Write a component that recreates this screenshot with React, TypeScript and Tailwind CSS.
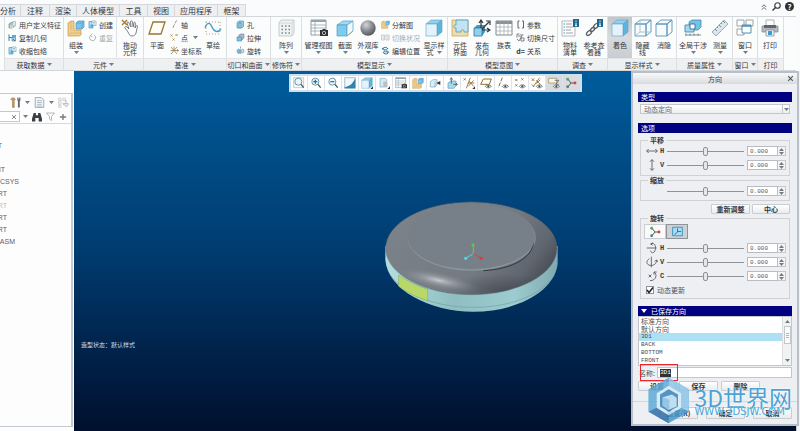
import { useState, type ReactNode } from "react";
import { clsx } from "clsx";

const TABS = [
  { label: "分析", width: "w-[21px] justify-start" },
  { label: "注释", width: "w-[29px]" },
  { label: "渲染", width: "w-[27px]" },
  { label: "人体模型", width: "w-[43px]" },
  { label: "工具", width: "w-[28px]" },
  { label: "视图", width: "w-[27px]" },
  { label: "应用程序", width: "w-[43px]" },
  { label: "框架", width: "w-[28px]" },
];

const TREE = [
  { text: "T", className: "w-[2px]" },
  { text: "", className: "w-[2px]" },
  { text: "NT", className: "w-[5px]" },
  { text: "CSYS", className: "w-[19px]" },
  { text: "RT", className: "w-[7px]" },
  { text: "RT", className: "w-[7px] text-[#b9bcc4]" },
  { text: "RT", className: "w-[7px]" },
  { text: "RT", className: "w-[7px]" },
  { text: "ASM", className: "w-[15px]" },
];

const SAVED_VIEWS = ["标准方向", "默认方向", "3D1", "BACK", "BOTTOM", "FRONT"];

/* ---------- icons, all on an 18 unit grid ---------- */

function Icon({ className = "size-[18px]", children }: { className?: string; children: ReactNode }) {
  return (
    <svg viewBox="0 0 18 18" fill="none" aria-hidden="true" className={clsx("shrink-0", className)}>
      {children}
    </svg>
  );
}

const Cube = ({ top = "#8fd0ec", side = "#5fb4dc", front = "#e4f3fb" }) => (
  <g stroke="#5aa3c8" strokeWidth="0.6" strokeLinejoin="round">
    <path d="M1 5 6 1h11l-5 4z" fill={top} />
    <path d="m12 5 5-4v12l-5 4z" fill={side} />
    <path d="M1 5h11v12H1z" fill={front} />
  </g>
);

const WireCube = ({ hidden = false }) => (
  <g stroke="#5c93b5" strokeWidth="0.9" strokeLinejoin="round">
    <path d="M1 5 6 1h11l-5 4zM12 5l5-4v12l-5 4zM1 5h11v12H1z" fill="#f6fbfe" />
    {hidden && <path d="M6 1v12h11M6 13l-5 4" stroke="#a3bccb" />}
  </g>
);

const Assemble = () => (
  <>
    <path d="M1 4 4 2h3v9h7v5l-2 1H1z" fill="#f0cd8c" stroke="#c79a4d" strokeWidth="0.7" />
    <path d="M4 2v9M1 17l3-3h10" stroke="#d6ab62" strokeWidth="0.6" />
    <path d="m9 4 2-2h6v6l-2 2H9z" fill="#7cc5e8" stroke="#4593bb" strokeWidth="0.7" />
    <path d="M9 4h6v6M15 4l2-2" stroke="#4593bb" strokeWidth="0.6" />
  </>
);

const Create = () => (
  <>
    <path d="M2 3h8v13H2z" fill="#b6dff2" stroke="#4b93b7" strokeWidth="1.4" />
    <path d="M8 2h8v9H8z" fill="#fff" stroke="#6d96ad" strokeWidth="1.2" />
    <path d="M5 9h5v6H5z" fill="#4ea9d4" />
    <path d="M10 5h4M10 8h4" stroke="#6d96ad" strokeWidth="1.2" />
  </>
);

const Shape = () => (
  <>
    <path d="m2 8 4-3h6v8l-3 3H2z" fill="#8ccbe8" stroke="#4b86a8" strokeWidth="1.2" />
    <path d="M9 3h6v9H9z" fill="#dce7ee" stroke="#8499a8" strokeWidth="1" />
    <path d="M4 10h6v6H4z" fill="#f0cf95" />
  </>
);

const CopyGeom = () => (
  <>
    <path d="M2 3v13M2 9h6" stroke="#2a6f97" strokeWidth="1.8" />
    <path d="M8 4h8v4H8z" fill="#57add6" />
    <path d="M8 9h7v7H8z" fill="#a7d8ef" stroke="#33789d" strokeWidth="1.2" />
    <path d="m10 12 4 4" stroke="#36454f" strokeWidth="1.4" />
  </>
);

const Repeat = () => (
  <path d="M5 5a6 6 0 1 0 7-1M9 1 5 5l4 3" stroke="#a9adb2" strokeWidth="1.8" />
);

const Hand = () => (
  <>
    <path d="m1 1 5 5M6 1 1 6" stroke="#a47b2c" strokeWidth="1.3" />
    <path
      d="M7 13 4 9c-1-1 1-2 2-1l2 2-2-6c0-1.500 1.500-1.500 2 0l2 4-.5-5c0-1.500 1.700-1.500 2 0l.7 5 .6-4c.3-1.200 1.700-1 1.600.3L14 9l1-2c.6-1 1.700-.5 1.500.5L15 14c-.5 2-2 3-4 3-2.500 0-3-2-4-4z"
      fill="#fff"
      stroke="#5b6066"
      strokeWidth="0.8"
    />
  </>
);

const Plane = () => <path d="M5 3h12l-4 12H1z" fill="#fffdf8" stroke="#9a7434" strokeWidth="1.300" />;

const Axis = () => <path d="M13 1 5 17" stroke="#8d6c30" strokeWidth="1.6" strokeDasharray="5 2 2 2" />;

const Points = () => (
  <path
    d="m1 3 4 4M5 3 1 7M11 2l4 4M15 2l-4 4M5 11l4 4M9 11l-4 4"
    stroke="#a47b2c"
    strokeWidth="1.4"
  />
);

const Csys = () => (
  <path d="m2 2 12 14M14 2 2 16M8 1v6M1 9h16M14 7l3 2-3 2" stroke="#8d6c30" strokeWidth="1.4" />
);

const Sketch = () => (
  <>
    <path d="M2 3h14M2 15h14M2 3v12M16 3v12" stroke="#a99767" strokeWidth="0.9" strokeDasharray="1 2" />
    <path d="M1 9c2-6 5-6 7-1s6 6 9 2" stroke="#3c9dcd" strokeWidth="1.3" />
  </>
);

const Hole = () => (
  <>
    <path d="m2 5 4-3h9v11l-3 3H2z" fill="#8fcbe6" stroke="#4788aa" strokeWidth="1.2" />
    <path d="M6 6h4v10H6z" fill="#e8f5fb" stroke="#4788aa" strokeWidth="1.2" />
    <path d="M8 4v12" stroke="#2f6b8d" />
  </>
);

const Extrude = () => (
  <>
    <path d="m5 6 3-4h8v8l-4 4H5z" fill="#a9bac5" stroke="#5c7482" strokeWidth="1" />
    <path d="M2 8h9v8H2z" fill="#7bc3e4" stroke="#3f89ae" strokeWidth="1.2" />
  </>
);

const Revolve = () => (
  <>
    <path d="M2 9c2-4 5-4 6 0v5c-3 2-6 0-6-5z" fill="#72bfe2" stroke="#3a84a9" />
    <path d="M10 9c2-4 6-3 6 1s-4 5-6 3z" fill="#bde2f2" stroke="#3a84a9" />
    <path d="M9 1v16" stroke="#6e7479" strokeWidth="1.2" strokeDasharray="3 1" />
  </>
);

const Pattern = () => (
  <>
    <path d="m2 4 2-3h13v13l-2 3H2z" fill="#f1f2f3" stroke="#b6babe" strokeWidth="0.7" />
    <path d="M2 4h13v13M15 4l2-3" stroke="#c5c9cc" strokeWidth="0.6" />
    <path
      d="M4.500 7h1.500M8 7h1.500M11.500 7H13M4.500 10.500h1.500M8 10.500h1.500M11.500 10.500H13M4.500 14h1.500M8 14h1.500M11.500 14H13"
      stroke="#7d8388"
      strokeWidth="1.500"
    />
  </>
);

const ManageView = () => (
  <>
    <path d="M1 1h15v15H1z" fill="#fff" stroke="#7f868c" strokeWidth="0.8" />
    <path d="M1 1h15v2H1z" fill="#9aa3aa" />
    <path d="M1 6h15M1 9h15M1 12h15M5 1v15" stroke="#90a4b0" strokeWidth="0.8" />
    <path d="M10 11h2l1-1h2l1 1h2v6h-8z" fill="#2f3235" />
    <circle cx="14" cy="14" r="1.700" stroke="#d8dadc" strokeWidth="0.8" />
  </>
);

const Section = () => (
  <g stroke="#4f9fc6" strokeWidth="0.7" strokeLinejoin="round">
    <path d="m1 6 6-4h10l-6 4z" fill="#a6daf1" />
    <path d="M1 6h10v11H1z" fill="#7fcbec" />
    <path d="m11 6 6-4v10l-6 5z" fill="#eef8fd" />
    <path d="m11 17 6-5" stroke="#b69655" />
  </g>
);

const Sphere = () => (
  <>
    <defs>
      <radialGradient id="sphere" cx="0.38" cy="0.3" r="0.75">
        <stop offset="0" stopColor="#d5d7d9" />
        <stop offset="0.5" stopColor="#8b8f94" />
        <stop offset="1" stopColor="#4e5257" />
      </radialGradient>
    </defs>
    <circle cx="9" cy="9" r="7.700" fill="url(#sphere)" />
  </>
);

const SwitchState = () => (
  <path d="M1 4h6v10H1zM10 4h6v10h-6zM3 7h3M12 7h3M3 11h3M12 11h3" stroke="#b2b5b9" strokeWidth="1.300" />
);

const EditPos = () => (
  <>
    <path d="M4 5a6 6 0 0 1 10 1M14 14a6 6 0 0 1-10-2" stroke="#2774a0" strokeWidth="2" />
    <path d="m1 6 3-3 2 5zM17 12l-4 3-1-5z" fill="#2774a0" />
    <path d="M6 7h6v5H6z" fill="#8bcbe8" stroke="#2774a0" />
  </>
);

const Interface = () => (
  <>
    <path d="M1 1h16v16H1z" fill="#f3dca6" stroke="#c9a45c" strokeWidth="0.8" />
    <path d="M5 1h12v12h-4c1-3-4-3-3 0H5V9C2 10 2 5 5 6z" fill="#c2e3f3" stroke="#5aa3c8" strokeWidth="0.9" />
  </>
);

const Publish = () => (
  <>
    <path d="m1 9 3-3h8v7l-3 4H1z" fill="#3f9dc8" />
    <path d="M1 9h8v8H1z" fill="#8fd0ec" stroke="#2f7499" strokeWidth="0.8" />
    <path d="M8 9V2M6 4l2-3 2 3M9 10l7-7M13 2l4 0 0 4M9 11h8M14 9l3 2-3 2" stroke="#30383d" strokeWidth="1.200" />
  </>
);

const TableIcon = () => (
  <>
    <path d="M1 2h16v14H1z" fill="#fff" stroke="#777d82" strokeWidth="0.9" />
    <path d="M1 2h16v3H1z" fill="#8a9095" />
    <path d="M1 8h16M1 12h16M5 2v14M9 2v14M13 2v14" stroke="#a2a7ab" strokeWidth="0.7" />
  </>
);

const Brackets = () => (
  <path d="M7 2H4v14h3M12 2h3v14h-3" stroke="#4d5358" strokeWidth="1.800" />
);

const SwitchDim = () => (
  <>
    <path d="M2 2v7M2 2h5M4 6h4M10 2v7M14 2l-8 14M10 10h6v6h-6z" stroke="#5a6065" strokeWidth="1.500" />
    <path d="m2 12 4 4" stroke="#5a6065" strokeWidth="1.500" />
  </>
);

const InfoBadge = () => (
  <>
    <path d="M12 0h6v8h-6z" fill="#1d6690" />
    <path d="M15 1.500v1.300M15 3.700V6.700M14 6.700h2" stroke="#fff" strokeWidth="1" />
  </>
);

const Bom = () => (
  <>
    <path d="M1 2h13v15H1z" fill="#fdfdfd" stroke="#a2a7ab" strokeWidth="0.800" />
    <path d="M5 5h6M5 8h7M5 11h5M5 14h7" stroke="#93989c" strokeWidth="0.900" />
    <path d="M2.500 5H4M2.500 8H4M2.500 11H4M2.500 14H4" stroke="#3c9dcd" strokeWidth="1.200" />
    <InfoBadge />
  </>
);

const RefViewer = () => (
  <>
    <g stroke="#595f64" strokeWidth="1.300">
      <ellipse cx="4" cy="14" rx="3" ry="1.800" transform="rotate(-45 4 14)" />
      <ellipse cx="7.500" cy="10.500" rx="2.600" ry="1.500" transform="rotate(-45 7.500 10.500)" />
      <ellipse cx="11" cy="7" rx="3" ry="1.800" transform="rotate(-45 11 7)" />
    </g>
    <InfoBadge />
  </>
);

const Interference = () => (
  <>
    <path d="m5 3 3-2h9v7l-3 3H5z" fill="#76c2e5" stroke="#3d8db4" strokeWidth="0.800" />
    <path d="M1 6h9v7H1z" fill="#a4d8ef" stroke="#3d8db4" strokeWidth="0.900" />
    <path d="M6 5h5v5H6z" fill="#fff" stroke="#2d7096" strokeWidth="0.900" />
    <path d="M1 16h16M2 14.500v2M6 14.500v2M10 14.500v2M14 14.500v2" stroke="#6b7075" strokeWidth="0.800" />
  </>
);

const Ruler = () => (
  <>
    <path d="m1 13 12-12 4 4L5 17z" fill="#d9e6ed" stroke="#8a9ba5" strokeWidth="0.800" />
    <path d="m4 10 2 2M6 8l1 1M8 6l2 2M10 4l1 1M12 2l2 2" stroke="#62727c" strokeWidth="0.800" />
  </>
);

const Windows = () => (
  <g stroke="#93989c" strokeWidth="0.900" fill="#fff">
    <path d="M1 1h7v6H1zM10 1h7v6h-7zM1 10h7v6H1z" />
    <path d="M6 6h9v8H6z" stroke="#3c86ab" />
    <path d="M6 7h9" stroke="#3c86ab" strokeWidth="1.400" />
  </g>
);

const Printer = () => (
  <>
    <path d="M5 1h8v6H5z" fill="#fff" stroke="#8f9498" strokeWidth="0.700" />
    <path d="M1 7h16v6H1z" fill="#b4b9bd" stroke="#7e858a" strokeWidth="0.700" />
    <path d="M3 6h12v3H3z" fill="#60666b" />
    <path d="M5 11h8v6H5z" fill="#eaf5fa" stroke="#7e858a" strokeWidth="0.700" />
    <path d="M7 12h4v4H7z" fill="#3c9dcd" />
  </>
);

const Lens = ({ sign = "" }) => (
  <>
    <circle cx="8" cy="7" r="5.300" fill="#e9f6fc" stroke="#4a7f9c" strokeWidth="1.200" />
    <path d="m12 11 4 5" stroke="#4c5257" strokeWidth="2" />
    {sign !== "" && <path d={sign} stroke="#1e6fa0" strokeWidth="1.800" />}
  </>
);

const Eye = () => (
  <>
    <path d="M8 14c2-3 7-3 9 0-2 3-7 3-9 0z" fill="#fff" stroke="#3f4346" />
    <circle cx="12.500" cy="14" r="1.700" fill="#3f4346" />
  </>
);

const Triad = () => (
  <>
    <path d="m4 3 5 6-5 6M9 9h6" stroke="#565b60" strokeWidth="1.500" />
    <circle cx="4" cy="3.500" r="2.200" fill="#63a464" />
    <circle cx="4" cy="14.500" r="2.200" fill="#4a8a83" />
    <circle cx="15" cy="9" r="2.200" fill="#d8433f" />
  </>
);

const VIEW_TOOLS: { name: string; icon: ReactNode; active?: boolean }[] = [
  { name: "重新调整", icon: <><path d="M1 1h15v15H1z" fill="#f8fafb" stroke="#a9b6be" /><Lens /></> },
  { name: "放大", icon: <Lens sign="M5 7h6M8 4v6" /> },
  { name: "缩小", icon: <Lens sign="M5 7h6" /> },
  { name: "重画", icon: <><path d="M1 1h16v16H1z" fill="#eef7fb" stroke="#7da9bf" /><path d="M17 1C14 9 9 14 1 15v2h16z" fill="#3582a9" /></> },
  { name: "显示样式", icon: <><Cube /><path d="M18 14v4h-4z" fill="#333" /></> },
  { name: "已命名视图", icon: <><path d="M3 2h8l2 2v11H3z" fill="#d6eaf4" stroke="#87a8ba" /><path d="M8 7h6v8H8z" fill="#b9bfc4" /><path d="M18 14v4h-4z" fill="#333" /></> },
  { name: "视图管理器", icon: <ManageView /> },
  { name: "分解图", icon: <Assemble /> },
  { name: "定向", icon: <><path d="m2 7 4-3h6v8l-3 3H2z" fill="#d8eef8" stroke="#79a5bb" /><path d="M9 7v8" stroke="#79a5bb" /><path d="M17 6v6l-6-3z" fill="#31363a" /></> },
  { name: "法向", icon: <><path d="m3 9 4-3h8v7l-3 4H3z" fill="#a7d8ee" stroke="#629bb8" /><path d="M8 10V2M6 4l2-3 2 3M11 11h6M15 9l2 2-2 2" stroke="#31363a" /></> },
  { name: "基准显示", icon: <><path d="m1 2 3 3M4 2 1 5M11 1 5 17M9 6l7 8M16 5l-8 9M7 9h10" stroke="#92702f" strokeWidth="1.300" /><path d="M18 14v4h-4z" fill="#333" /></> },
  { name: "平面显示", icon: <><path d="M5 3h12l-3 8H1z" stroke="#92702f" strokeWidth="1.500" /><Eye /></> },
  { name: "轴显示", icon: <><path d="M8 1 2 16" stroke="#92702f" strokeWidth="1.500" strokeDasharray="6 2" /><Eye /></> },
  { name: "点显示", icon: <><path d="m2 3 3 3M5 3 2 6M11 2l3 3M14 2l-3 3M2 11l3 3M5 11l-3 3" stroke="#92702f" strokeWidth="1.300" /><Eye /></> },
  { name: "坐标系显示", icon: <><path d="m1 2 4 4M5 2 1 6M13 1 3 15M8 5l6 6M14 4 8 10M1 11l4 4" stroke="#92702f" strokeWidth="1.300" /><Eye /></> },
  { name: "注释显示", icon: <><path d="M1 2h12v7H1z" fill="#faf4e3" stroke="#9c895a" /><path d="M10 5h6l-4 6h4" stroke="#4c5156" /><Eye /></>, active: true },
  { name: "旋转中心", icon: <Triad />, active: true },
];

/* ---------- ribbon ---------- */

function Arrow({ className }: { className?: string }) {
  return (
    <svg viewBox="0 0 5 3" aria-hidden="true" className={clsx("h-[3px] w-[5px] shrink-0", className)}>
      <path d="M0 0h5L2.500 3z" fill="#777c82" />
    </svg>
  );
}

function Big({
  icon,
  lines,
  width = "w-[24px]",
  menu,
  inlineMenu,
  pressed,
}: {
  icon: ReactNode;
  lines: string[];
  width?: string;
  menu?: boolean;
  inlineMenu?: boolean;
  pressed?: boolean;
}) {
  return (
    <button
      type="button"
      aria-pressed={pressed}
      className={clsx(
        "flex h-[41px] shrink-0 flex-col items-center pt-[2px] leading-[7px]",
        width,
        pressed && "bg-linear-to-b from-[#c2c5ca] via-[#d9dbde] to-[#c9ccd0]",
      )}
    >
      <Icon>{icon}</Icon>
      <span className="mt-[5px] whitespace-nowrap">{lines[0]}</span>
      {lines[1] && (
        <span className="flex items-center gap-[3px] whitespace-nowrap">
          {lines[1]}
          {inlineMenu && <Arrow />}
        </span>
      )}
      {menu && <Arrow className="mt-[2px]" />}
    </button>
  );
}

function Small({ icon, label, menu, disabled }: { icon: ReactNode; label: string; menu?: boolean; disabled?: boolean }) {
  return (
    <button
      type="button"
      disabled={disabled}
      className={clsx("flex h-[13px] items-center gap-[2px] whitespace-nowrap", disabled && "text-[#a6aab0]")}
    >
      <Icon className="size-[9px]">{icon}</Icon>
      {label}
      {menu && <Arrow className="ml-[3px]" />}
    </button>
  );
}

function Group({ label, width, menu = true, children }: { label: string; width: string; menu?: boolean; children: ReactNode }) {
  return (
    <section aria-label={label} className={clsx("flex shrink-0 flex-col border-r border-[#dcdee2]", width)}>
      <div className="flex h-[41px]">{children}</div>
      <div className="flex h-[12px] items-center justify-center gap-[2px] whitespace-nowrap border-t border-[#e2e4e7] bg-[#eff0f2]">
        {label}
        {menu && <Arrow />}
      </div>
    </section>
  );
}

const Stack = ({ className, children }: { className?: string; children: ReactNode }) => (
  <div className={clsx("flex shrink-0 flex-col items-start pt-px", className)}>{children}</div>
);

function Ribbon() {
  return (
    <header className="bg-[#fafbfc]">
      <div className="flex h-[16px] items-end justify-between">
        <nav className="flex h-[12px] border-t border-[#d5d7db] bg-[#eeeff1] text-[8px]">
          {TABS.map((tab) => (
            <button
              key={tab.label}
              type="button"
              className={clsx("flex items-center justify-center whitespace-nowrap border-r border-[#d5d7db]", tab.width)}
            >
              {tab.label}
            </button>
          ))}
        </nav>
        <div className="flex items-center gap-[4px] self-start pt-[2px] pr-[6px]">
          <button type="button" aria-label="折叠功能区">
            <Icon className="size-[8px]">
              <path d="m4 9 5-5 5 5M4 15l5-5 5 5" stroke="#55595e" strokeWidth="2" />
            </Icon>
          </button>
          <button type="button" aria-label="搜索">
            <Icon className="size-[9px]">
              <circle cx="11" cy="7" r="5.500" stroke="#3d4145" strokeWidth="2.400" />
              <path d="m7 11-6 6" stroke="#3d4145" strokeWidth="3" />
            </Icon>
          </button>
          <button type="button" aria-label="帮助" className="flex size-[9px] items-center justify-center rounded-full bg-[#2c2f33] text-[8px] font-bold text-white">
            ?
          </button>
        </div>
      </div>

      <div className="mr-[4px] flex overflow-hidden border-y border-[#d3d6da] bg-[#fbfcfc] pl-[4px]">
        <Group label="获取数据" width="w-[60px] border-l">
          <Stack className="pl-[3px]">
            <Small icon={<Shape />} label="用户定义特征" />
            <Small icon={<CopyGeom />} label="复制几何" />
            <Small icon={<Create />} label="收缩包络" />
          </Stack>
        </Group>
        <Group label="元件" width="w-[80px]">
          <Big icon={<Assemble />} lines={["组装"]} menu />
          <Stack className="w-[29px] border-r border-[#e0e2e5]">
            <Small icon={<Create />} label="创建" />
            <Small icon={<Repeat />} label="重复" disabled />
          </Stack>
          <Big icon={<Hand />} lines={["拖动", "元件"]} width="w-[26px]" />
        </Group>
        <Group label="基准" width="w-[83px]">
          <Big icon={<Plane />} lines={["平面"]} width="w-[26px]" />
          <Stack className="w-[31px]">
            <Small icon={<Axis />} label="轴" />
            <Small icon={<Points />} label="点" menu />
            <Small icon={<Csys />} label="坐标系" />
          </Stack>
          <Big icon={<Sketch />} lines={["草绘"]} />
        </Group>
        <Group label="切口和曲面" width="w-[44px]">
          <Stack className="pl-[9px]">
            <Small icon={<Hole />} label="孔" />
            <Small icon={<Extrude />} label="拉伸" />
            <Small icon={<Revolve />} label="旋转" />
          </Stack>
        </Group>
        <Group label="修饰符" width="w-[31px]">
          <Big icon={<Pattern />} lines={["阵列"]} width="w-[30px]" menu />
        </Group>
        <Group label="模型显示" width="w-[146px]">
          <Big icon={<ManageView />} lines={["管理视图"]} width="w-[33px]" menu />
          <Big icon={<Section />} lines={["截面"]} width="w-[20px]" menu />
          <Big icon={<Sphere />} lines={["外观库"]} width="w-[26px]" menu />
          <Stack className="w-[41px]">
            <Small icon={<Assemble />} label="分解图" />
            <Small icon={<SwitchState />} label="切换状况" disabled />
            <Small icon={<EditPos />} label="编辑位置" />
          </Stack>
          <Big icon={<Cube />} lines={["显示样", "式"]} inlineMenu />
        </Group>
        <Group label="模型意图" width="w-[110px]">
          <Big icon={<Interface />} lines={["元件", "界面"]} />
          <Big icon={<Publish />} lines={["发布", "几何"]} width="w-[20px]" />
          <Big icon={<TableIcon />} lines={["族表"]} />
          <Stack>
            <Small icon={<Brackets />} label="参数" />
            <Small icon={<SwitchDim />} label="切换尺寸" />
            <button type="button" className="flex h-[13px] items-center gap-[2px] whitespace-nowrap">
              <b className="w-[9px]">d=</b>
              关系
            </button>
          </Stack>
        </Group>
        <Group label="调查" width="w-[50px]">
          <Big icon={<Bom />} lines={["物料", "清单"]} />
          <Big icon={<RefViewer />} lines={["参考查", "看器"]} />
        </Group>
        <Group label="显示样式" width="w-[69px]">
          <Big icon={<Cube />} lines={["着色"]} pressed />
          <Big icon={<WireCube hidden />} lines={["隐藏", "线"]} width="w-[21px]" />
          <Big icon={<WireCube />} lines={["消隐"]} width="w-[22px]" />
        </Group>
        <Group label="质量属性" width="w-[56px]">
          <Big icon={<Interference />} lines={["全局干涉"]} width="w-[32px]" menu />
          <Big icon={<Ruler />} lines={["测量"]} width="w-[22px]" menu />
        </Group>
        <Group label="窗口" width="w-[25px]">
          <Big icon={<Windows />} lines={["窗口"]} menu />
        </Group>
        <Group label="打印" width="w-[26px]" menu={false}>
          <Big icon={<Printer />} lines={["打印"]} />
        </Group>
      </div>
    </header>
  );
}

/* ---------- model tree ---------- */

function ModelTree() {
  return (
    <aside className="flex w-[74px] shrink-0 flex-col bg-[#fdfdfd] pt-[22px] pb-[4px]">
      <div className="mr-px flex-1 border-t border-r-2 border-b border-[#c3cad3]">
        <div className="flex h-[16px] items-center justify-end gap-[4px] pr-[2px]">
          <Icon className="size-[11px]">
            <path d="M1 4c3-4 6-3 8 0L7 5v12H4V5z" fill="#c99a52" stroke="#8c7047" strokeWidth="0.800" />
            <path d="M12 1v5h1v11h3V6h1V1h-2v3h-1V1z" fill="#5d646b" />
          </Icon>
          <Arrow />
          <Icon className="size-[11px]">
            <path d="M2 1h10l4 4v12H2z" fill="#f4f8fa" stroke="#697a86" />
            <path d="M5 6h8M5 9h8M5 12h8M5 15h8" stroke="#7f9bab" />
          </Icon>
          <Arrow />
          <Icon className="size-[11px]">
            <path d="M1 2h4v4H1zM1 8h4v4H1zM8 2h4v4H8zM1 14h4v3H1z" stroke="#b5b9be" />
            <path d="M8 11h9l-3 5zM13 5v6" stroke="#a2a6ab" strokeWidth="1.300" />
          </Icon>
        </div>
        <div className="flex h-[14px] items-center gap-[4px] border-b border-[#d6dade]">
          <div className="flex h-[11px] w-[20px] items-center border border-l-0 border-[#c5c9ce] bg-white">
            <input aria-label="搜索模型树" className="w-[11px] min-w-0 outline-none" />
            <button type="button" aria-label="清除">
              <Icon className="size-[6px]">
                <path d="m3 3 12 12M15 3 3 15" stroke="#6c7177" strokeWidth="2.500" />
              </Icon>
            </button>
          </div>
          <Arrow className="-ml-px" />
          <Icon className="size-[10px]">
            <path d="M3 2h4v4h4V2h4l3 10v5h-6v-6H6v6H0v-5z" fill="#3b3f43" />
          </Icon>
          <Icon className="size-[9px]">
            <path d="M1 2h16l-6 7v8l-4-3V9z" stroke="#9ba0a5" strokeWidth="1.500" />
          </Icon>
          <Icon className="size-[8px]">
            <path d="M9 2v14M2 9h14" stroke="#74797e" strokeWidth="3" />
          </Icon>
        </div>
        <ul className="pt-[16px] font-['Liberation_Sans',Arial,sans-serif] text-[#5a6072]">
          {TREE.map((row, i) => (
            <li key={i} className={clsx("flex h-[12px] items-center justify-end overflow-hidden", row.className)}>
              {row.text}
            </li>
          ))}
        </ul>
      </div>
    </aside>
  );
}

/* ---------- graphics area ---------- */

function Model() {
  return (
    <svg viewBox="0 0 600 390" role="img" aria-label="模型" className="absolute top-[120px] left-[296px] h-[130px] w-[200px]">
      <defs>
        <linearGradient id="base" x1="0" x2="1">
          <stop offset="0" stopColor="#b4dede" />
          <stop offset="0.4" stopColor="#8fbfc2" />
          <stop offset="0.75" stopColor="#9ccccf" />
          <stop offset="1" stopColor="#7fa9b0" />
        </linearGradient>
        <linearGradient id="cap" x1="0" y1="0.3" x2="1" y2="0.7">
          <stop offset="0" stopColor="#7b828a" />
          <stop offset="0.6" stopColor="#737a82" />
          <stop offset="0.85" stopColor="#60666f" />
          <stop offset="1" stopColor="#444951" />
        </linearGradient>
        <radialGradient id="shine">
          <stop offset="0" stopColor="#c8ccd2" />
          <stop offset="0.4" stopColor="#a2a7ae" stopOpacity="0.6" />
          <stop offset="1" stopColor="#7b828a" stopOpacity="0" />
        </radialGradient>
        <radialGradient id="shade">
          <stop offset="0" stopColor="#353941" stopOpacity="0.5" />
          <stop offset="1" stopColor="#353941" stopOpacity="0" />
        </radialGradient>
        <clipPath id="capClip">
          <ellipse cx="304" cy="172" rx="257" ry="139" />
        </clipPath>
      </defs>
      <path d="M46 165v42c8 88 128 155 264 155s246-64 253-145v-52z" fill="url(#base)" />
      <path d="M60 250c38 62 140 99 250 99s205-36 243-97" fill="none" stroke="#739fa5" strokeWidth="2" />
      <path d="M86 252c24 18 54 33 87 43v34c-34-11-64-25-87-43z" fill="#b8d968" stroke="#8ba850" strokeWidth="1.500" />
      <g clipPath="url(#capClip)">
        <ellipse cx="304" cy="172" rx="257" ry="139" fill="url(#cap)" />
        <ellipse cx="400" cy="298" rx="180" ry="50" fill="url(#shade)" />
        <ellipse cx="205" cy="268" rx="125" ry="26" transform="rotate(12 205 268)" fill="url(#shine)" />
      </g>
      <ellipse cx="304" cy="172" rx="257" ry="139" fill="none" stroke="#5d6872" strokeWidth="1.500" />
      <ellipse cx="305" cy="140" rx="192" ry="99" fill="#8d949c" />
      <path d="M450 79c72 50 58 150-110 160" fill="none" stroke="#343940" strokeWidth="3" />
      <ellipse cx="304" cy="137" rx="191" ry="98" fill="#778088" />
      <path d="M310 188v-26" stroke="#55d24c" strokeWidth="3" />
      <path d="m310 188-22 13" stroke="#4fd5e4" strokeWidth="3" />
      <path d="m310 188 22 13" stroke="#d9443e" strokeWidth="3" />
      <path d="M305 158h8v8h-8z" fill="#55d24c" />
      <circle cx="287" cy="202" r="5" fill="#4fd5e4" />
      <circle cx="333" cy="202" r="5" fill="#e03a36" />
    </svg>
  );
}

function GraphicsArea() {
  return (
    <main className="relative flex-1 bg-linear-to-b from-[#005c9c] via-[#003c70] to-[#00102e]">
      <div role="toolbar" aria-label="视图工具" className="mx-auto mt-[3px] flex w-fit border-2 border-[#cfe0ec] bg-white">
        {VIEW_TOOLS.map((tool) => (
          <button
            key={tool.name}
            type="button"
            aria-label={tool.name}
            aria-pressed={tool.active}
            className={clsx(
              "flex h-[14px] w-[17px] items-center justify-center border-r border-[#dde4e9] last:border-r-0",
              tool.active && "bg-[#d8dbdf]",
            )}
          >
            <Icon className="size-[12px]">{tool.icon}</Icon>
          </button>
        ))}
      </div>
      <Model />
      <p className="absolute top-[270px] left-[7px] text-[6px] leading-[8px] text-[#d5dde6]">造型状态：默认样式</p>
    </main>
  );
}

/* ---------- orientation dialog ---------- */

const BUTTON =
  "flex h-[10px] items-center justify-center rounded-[1px] border border-[#c9ccd1] bg-linear-to-b from-white to-[#e9ebee]";

function Banner({ children, className }: { children: ReactNode; className?: string }) {
  return (
    <h2 className={clsx("flex h-[10px] items-center gap-[4px] bg-[#000080] pl-[3px] text-white", className)}>{children}</h2>
  );
}

function SliderRow({ id, label, icon }: { id: string; label?: string; icon?: ReactNode }) {
  const [value, setValue] = useState(0);
  const step = (delta: number) => setValue((v) => Math.max(-100, Math.min(100, v + delta)));

  return (
    <div className="flex h-[14px] items-center pr-[3px] pl-[4px]">
      <span className="flex w-[13px] shrink-0 items-center justify-center">
        {icon && <Icon className="size-[12px]">{icon}</Icon>}
      </span>
      <label htmlFor={id} className="w-[9px] shrink-0 pl-[2px] font-['Liberation_Mono',monospace] font-bold">
        {label}
      </label>
      <input
        id={id}
        type="range"
        min={-100}
        max={100}
        value={value}
        aria-label={label ?? "缩放"}
        onChange={(e) => setValue(Number(e.target.value))}
        className="h-[9px] w-0 min-w-0 flex-1 appearance-none bg-transparent bg-[linear-gradient(#8f9297,#8f9297)] bg-[length:100%_1px] bg-center bg-no-repeat [&::-webkit-slider-thumb]:h-[9px] [&::-webkit-slider-thumb]:w-[5px] [&::-webkit-slider-thumb]:appearance-none [&::-webkit-slider-thumb]:rounded-[2px] [&::-webkit-slider-thumb]:border [&::-webkit-slider-thumb]:border-[#8f9297] [&::-webkit-slider-thumb]:bg-[#e6e7e9]"
      />
      <input
        aria-label={`${label ?? "缩放"} 数值`}
        value={value.toFixed(3)}
        onChange={(e) => setValue(Number(e.target.value) || 0)}
        className="ml-[3px] h-[10px] w-[31px] shrink-0 border border-[#b9bcc1] bg-white pl-[2px] font-['Liberation_Mono',monospace] text-[6px] text-[#555960] outline-none"
      />
      <span className="flex h-[10px] w-[8px] shrink-0 flex-col border border-l-0 border-[#c3c6ca] bg-[#f3f4f5]">
        <button type="button" aria-label="增加" onClick={() => step(1)} className="flex flex-1 items-center justify-center">
          <Arrow className="rotate-180" />
        </button>
        <button type="button" aria-label="减少" onClick={() => step(-1)} className="flex flex-1 items-center justify-center">
          <Arrow />
        </button>
      </span>
    </div>
  );
}

function Fieldset({ legend, children, className }: { legend: string; children: ReactNode; className?: string }) {
  return (
    <fieldset className={clsx("mx-[2px] min-w-0 border border-[#cfd1d5]", className)}>
      <legend className="ml-[7px] px-[2px] font-bold leading-[8px]">{legend}</legend>
      {children}
    </fieldset>
  );
}

function Watermark() {
  return (
    <div className="pointer-events-none absolute right-[5px] bottom-0 flex items-center gap-[4px] text-[#4da3d4]">
      <svg viewBox="0 0 126 140" aria-hidden="true" className="h-[47px] w-[42px] opacity-85">
        <path d="M62 2 122 36v68L62 138 2 104V36z" fill="#4a9bd0" />
        <path d="M62 2 122 36v68L100 92V48L62 26z" fill="#8cc7e8" />
        <path d="M2 36 62 2v24L26 48v44L2 104z" fill="#5fabd9" />
        <path d="m2 104 24-12 36 22v24z" fill="#2c6ea8" />
        <path d="m62 26 38 22v44l-38 22-36-22V48z" fill="#d6ebf6" />
        <path d="m62 36 28 16v36L62 104 36 88V52z" fill="#3a83bb" />
        <path d="m44 60 28-8 14 10v26l-24 10-18-12z" fill="#b8dcf0" />
        <path d="m44 60 20 8v30l-20-12z" fill="#86bfe2" />
      </svg>
      <div className="flex flex-col">
        <span className="whitespace-nowrap text-[23px] leading-[22px] [text-shadow:0_0_1px_#fff,0_0_2px_#fff]">3D世界网</span>
        <span className="whitespace-nowrap font-['DejaVu_Sans',sans-serif] text-[10px] leading-[8px] [text-shadow:0_0_1px_#fff]">
          WWW.3DSJW.COM
        </span>
      </div>
    </div>
  );
}

function OrientationDialog() {
  const [selected, setSelected] = useState("3D1");
  const [name, setName] = useState("3D1");
  const [mode, setMode] = useState("screen");

  return (
    <section
      role="dialog"
      aria-label="方向"
      className="absolute top-0 right-px flex w-[168px] flex-col border-2 border-[#b9bfc8] bg-[#eeeff2] pb-[5px]"
    >
      <div className="flex h-[11px] items-center bg-linear-to-b from-[#f8f9fa] to-[#d9dbdf] pr-[3px] pl-[10px]">
        <h1 className="flex-1 text-center">方向</h1>
        <button type="button" aria-label="关闭">
          <Icon className="size-[7px]">
            <path d="m3 3 12 12M15 3 3 15" stroke="#53575c" strokeWidth="3" />
          </Icon>
        </button>
      </div>

      <div className="flex flex-col px-[5px] pt-[8px]">
        <Banner>类型</Banner>
        <div className="relative mx-[2px] mt-[2px]">
          <select aria-label="类型" className="block h-[10px] w-full appearance-none border border-[#c3c6cb] bg-linear-to-b from-white to-[#eceef0] pl-[3px] leading-[8px] text-[#5f646a] outline-none">
            <option>动态定向</option>
          </select>
          <span className="pointer-events-none absolute inset-y-0 right-0 flex w-[8px] items-center justify-center border-l border-[#c3c6cb]">
            <Arrow />
          </span>
        </div>

        <Banner className="mt-[9px]">选项</Banner>
        <Fieldset legend="平移" className="mt-[3px] pb-[3px]">
          <SliderRow id="pan-h" label="H" icon={<path d="M1 9h16M4 6 1 9l3 3M14 6l3 3-3 3" stroke="#55595e" strokeWidth="1.300" />} />
          <SliderRow id="pan-v" label="V" icon={<path d="M9 1v16M6 4l3-3 3 3M6 14l3 3 3-3" stroke="#55595e" strokeWidth="1.300" />} />
        </Fieldset>
        <Fieldset legend="缩放" className="pb-[2px]">
          <SliderRow id="zoom" />
        </Fieldset>
        <div className="mt-[3px] mr-[2px] flex justify-end gap-[2px] font-bold">
          <button type="button" className={clsx(BUTTON, "w-[39px]")}>重新调整</button>
          <button type="button" className={clsx(BUTTON, "w-[38px]")}>中心</button>
        </div>

        <Fieldset legend="旋转" className="pb-px">
          <div className="mt-[2px] mb-[2px] ml-[3px] flex">
            <button
              type="button"
              aria-label="旋转中心"
              aria-pressed={mode === "center"}
              onClick={() => setMode("center")}
              className={clsx(
                "flex h-[15px] w-[22px] items-center justify-center border",
                mode === "center" ? "border-[#8f9399] bg-[#cdd0d4]" : "border-[#c9ccd1] bg-[#f9fafa]",
              )}
            >
              <Icon className="size-[12px]"><Triad /></Icon>
            </button>
            <button
              type="button"
              aria-label="屏幕中心"
              aria-pressed={mode === "screen"}
              onClick={() => setMode("screen")}
              className={clsx(
                "flex h-[15px] w-[22px] items-center justify-center border",
                mode === "screen" ? "border-[#8f9399] bg-[#cdd0d4]" : "border-[#c9ccd1] bg-[#f9fafa]",
              )}
            >
              <Icon className="size-[11px]">
                <path d="M1 2h16v14H1z" fill="#a9dbf2" stroke="#3d8fb8" strokeWidth="1.500" />
                <path d="M9 4v6l-5 4M9 9h6" stroke="#2774a0" strokeWidth="1.500" />
              </Icon>
            </button>
          </div>
          <SliderRow
            id="rot-h"
            label="H"
            icon={<path d="M1 9h15M7 3c6-3 8 3 7 8-1 6-6 7-7 2M7 3l3-2M7 3l3 2" stroke="#55595e" strokeWidth="1.300" />}
          />
          <SliderRow
            id="rot-v"
            label="V"
            icon={<path d="M8 1v16M5 4c-5 3-5 9 1 10s10-3 10-8M16 6l-3 2M16 6l2 3" stroke="#55595e" strokeWidth="1.300" />}
          />
          <SliderRow
            id="rot-c"
            label="C"
            icon={<path d="M12 3c5 3 4 13-6 13M12 3v4M12 3h4M4 7l4 4M8 7l-4 4" stroke="#55595e" strokeWidth="1.300" />}
          />
          <label className="ml-[5px] flex h-[14px] w-fit items-center gap-[3px] text-[#4c5056]">
            <span className="relative flex size-[8px]">
              <input
                type="checkbox"
                defaultChecked
                className="peer size-[8px] appearance-none border border-[#8d9197] bg-white"
              />
              <svg viewBox="0 0 8 8" aria-hidden="true" className="pointer-events-none absolute inset-0 hidden size-[8px] peer-checked:block">
                <path d="m1 4 2 2.500L7 1.500" fill="none" stroke="#1f2225" strokeWidth="1.500" />
              </svg>
            </span>
            动态更新
          </label>
        </Fieldset>

        <Banner className="mt-[7px]">
          <svg viewBox="0 0 6 4" aria-hidden="true" className="h-[4px] w-[6px]">
            <path d="M0 0h6L3 4z" fill="#fff" />
          </svg>
          已保存方向
        </Banner>
        <div className="flex border border-[#c3c6cb] bg-white">
          <ul role="listbox" aria-label="已保存方向" className="flex-1 text-[#4c5056]">
            {SAVED_VIEWS.map((view) => (
              <li
                key={view}
                role="option"
                aria-selected={view === selected}
                onClick={() => {
                  setSelected(view);
                  setName(view);
                }}
                className={clsx(
                  "h-[8px] cursor-default pl-[2px] leading-[8px]",
                  /^[\x20-\x7e]+$/.test(view) && "font-['Liberation_Mono',monospace] text-[6px]",
                  view === selected && "bg-[#aee0f4]",
                )}
              >
                {view}
              </li>
            ))}
          </ul>
          <div className="flex w-[9px] flex-col items-center border-l border-[#dcdee1] bg-[#f1f2f4]">
            <button type="button" aria-label="向上滚动" className="flex h-[9px] items-center"><Arrow className="rotate-180" /></button>
            <span className="flex h-[18px] w-[7px] flex-col items-center justify-center gap-px border border-[#c3c6cb] bg-[#fafafb]">
              <i className="h-px w-[3px] bg-[#b0b3b8]" />
              <i className="h-px w-[3px] bg-[#b0b3b8]" />
              <i className="h-px w-[3px] bg-[#b0b3b8]" />
            </span>
            <button type="button" aria-label="向下滚动" className="mt-auto flex h-[9px] items-center"><Arrow /></button>
          </div>
        </div>

        <div className="relative mt-px flex h-[11px] items-center">
          <label htmlFor="view-name" className="w-[19px] whitespace-nowrap pl-px text-[#4c5056]">名称:</label>
          <span className="flex h-[11px] flex-1 items-center border border-[#c3c6cb] bg-white pl-[2px]">
            <input
              id="view-name"
              value={name}
              onChange={(e) => setName(e.target.value)}
              className="h-[8px] w-[11px] bg-[#2e3136] font-['Liberation_Mono',monospace] text-[6px] text-white outline-none"
            />
          </span>
          <span className="pointer-events-none absolute -top-[3px] left-[2px] h-[17px] w-[38px] border border-[#e8282e]" />
        </div>

        <div className="mt-[3px] flex gap-[3px] font-bold">
          <button type="button" className={clsx(BUTTON, "w-[38px]")}>设置</button>
          <button type="button" className={clsx(BUTTON, "w-[39px]")}>保存</button>
          <button type="button" className={clsx(BUTTON, "w-[39px]")}>删除</button>
        </div>
      </div>

      <div className="mt-[10px] flex justify-end gap-[8px] border-t border-[#d5d7db] pt-[5px] pr-[5px] font-bold">
        <button type="button" className={clsx(BUTTON, "h-[12px] w-[39px]")}>重置(R)</button>
        <button type="button" className={clsx(BUTTON, "h-[12px] w-[39px] border-[#9ccbe4] to-[#bfe3f5]")}>确定</button>
        <button type="button" className={clsx(BUTTON, "h-[12px] w-[39px]")}>取消</button>
      </div>
      <Watermark />
    </section>
  );
}

export default function App() {
  return (
    <div className="flex min-h-screen flex-col overflow-hidden bg-[#e9ebee] font-['Noto_Sans_CJK_SC',sans-serif] text-[7px] leading-[8px] text-[#33373c]">
      <Ribbon />
      <div className="relative flex flex-1">
        <ModelTree />
        <GraphicsArea />
        <div className="w-[4px] shrink-0 border-l border-[#c3cad3] bg-[#f1f3f5]" />
        <OrientationDialog />
      </div>
    </div>
  );
}
